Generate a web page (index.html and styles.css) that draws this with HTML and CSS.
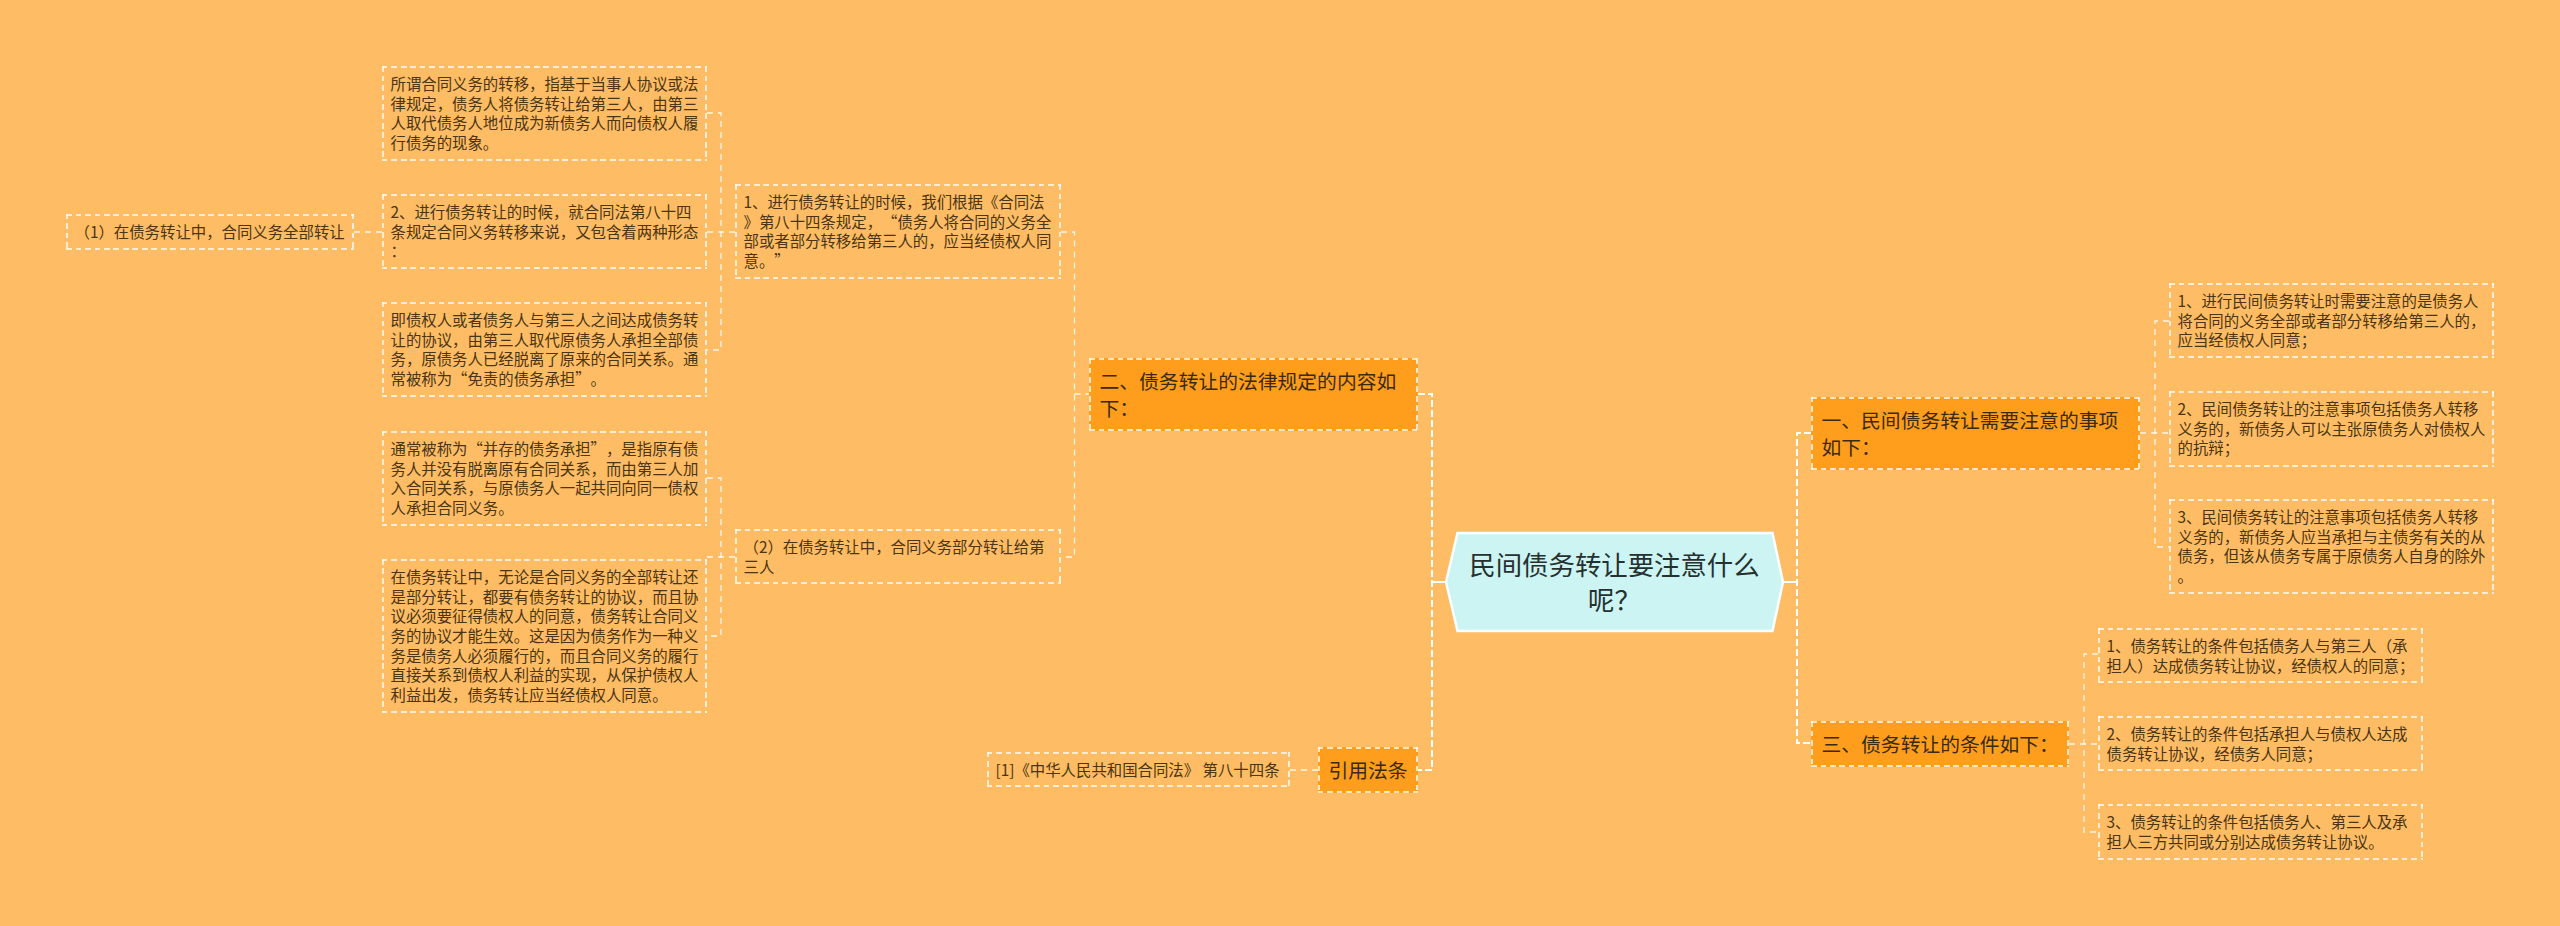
FILE: index.html
```html
<!DOCTYPE html>
<html lang="zh-CN">
<head>
<meta charset="utf-8">
<title>民间债务转让要注意什么呢？</title>
<link rel="stylesheet" href="styles.css">
</head>
<body>
<main class="map">
  <svg class="links" width="2560" height="926" viewBox="0 0 2560 926" aria-hidden="true">
    <g class="thin">
      <path d="M354 232H382"/>
      <path d="M707 113H721V350H707"/>
      <path d="M707 232H735"/>
      <path d="M707 478H721V636H707"/>
      <path d="M707 557H735"/>
      <path d="M1061 232H1074.5V557H1061"/>
      <path d="M1074.5 394H1089"/>
      <path d="M2140 433H2169"/>
      <path d="M2169 321H2155V547H2169"/>
      <path d="M2069 744H2098"/>
      <path d="M2098 654H2084V832H2098"/>
      <path d="M1290 770H1318"/>
    </g>
    <g class="thick">
      <path d="M1418 394H1432V770H1418"/>
      <path d="M1811 433H1797V743H1811"/>
    </g>
    <path class="stub" d="M1432 582H1446"/>
    <path class="stub" d="M1783 582H1797"/>
    <polygon class="root-shape" points="1446,582 1457.500,533 1772.500,533 1783,582 1772.500,631 1457.500,631"/>
  </svg>

  <div class="node root">民间债务转让要注意什么<br>呢？</div>

  <div class="node main n-left2">二、债务转让的法律规定的内容如<br>下：</div>
  <div class="node main n-cite">引用法条</div>
  <div class="node main n-right1">一、民间债务转让需要注意的事项<br>如下：</div>
  <div class="node main n-right3">三、债务转让的条件如下：</div>

  <div class="node leaf b1">1、进行债务转让的时候，我们根据《合同法<br>》第八十四条规定，“债务人将合同的义务全<br>部或者部分转移给第三人的，应当经债权人同<br>意。”</div>
  <div class="node leaf b2">（2）在债务转让中，合同义务部分转让给第<br>三人</div>
  <div class="node leaf l1">（1）在债务转让中，合同义务全部转让</div>
  <div class="node leaf a1">所谓合同义务的转移，指基于当事人协议或法<br>律规定，债务人将债务转让给第三人，由第三<br>人取代债务人地位成为新债务人而向债权人履<br>行债务的现象。</div>
  <div class="node leaf a2">2、进行债务转让的时候，就合同法第八十四<br>条规定合同义务转移来说，又包含着两种形态<br>：</div>
  <div class="node leaf a3">即债权人或者债务人与第三人之间达成债务转<br>让的协议，由第三人取代原债务人承担全部债<br>务，原债务人已经脱离了原来的合同关系。通<br>常被称为“免责的债务承担”。</div>
  <div class="node leaf a4">通常被称为“并存的债务承担”，是指原有债<br>务人并没有脱离原有合同关系，而由第三人加<br>入合同关系，与原债务人一起共同向同一债权<br>人承担合同义务。</div>
  <div class="node leaf a5">在债务转让中，无论是合同义务的全部转让还<br>是部分转让，都要有债务转让的协议，而且协<br>议必须要征得债权人的同意，债务转让合同义<br>务的协议才能生效。这是因为债务作为一种义<br>务是债务人必须履行的，而且合同义务的履行<br>直接关系到债权人利益的实现，从保护债权人<br>利益出发，债务转让应当经债权人同意。</div>
  <div class="node leaf c1">[1]《中华人民共和国合同法》 第八十四条</div>

  <div class="node leaf r1">1、进行民间债务转让时需要注意的是债务人<br>将合同的义务全部或者部分转移给第三人的，<br>应当经债权人同意；</div>
  <div class="node leaf r2">2、民间债务转让的注意事项包括债务人转移<br>义务的，新债务人可以主张原债务人对债权人<br>的抗辩；</div>
  <div class="node leaf r3">3、民间债务转让的注意事项包括债务人转移<br>义务的，新债务人应当承担与主债务有关的从<br>债务，但该从债务专属于原债务人自身的除外<br>。</div>
  <div class="node leaf s1">1、债务转让的条件包括债务人与第三人（承<br>担人）达成债务转让协议，经债权人的同意；</div>
  <div class="node leaf s2">2、债务转让的条件包括承担人与债权人达成<br>债务转让协议，经债务人同意；</div>
  <div class="node leaf s3">3、债务转让的条件包括债务人、第三人及承<br>担人三方共同或分别达成债务转让协议。</div>
</main>
</body>
</html>
```

FILE: styles.css
```css
html, body {
  margin: 0;
  padding: 0;
  background: #febc64;
}

.map {
  position: relative;
  width: 2560px;
  height: 926px;
  overflow: hidden;
  background: #febc64;
  font-family: "Noto Sans CJK SC", "Noto Sans", sans-serif;
  text-spacing-trim: space-all;
}

.links {
  position: absolute;
  left: 0;
  top: 0;
}

.links path {
  fill: none;
  stroke: #fff;
}

.thin path {
  stroke-width: 1.3;
  stroke-opacity: 0.85;
  stroke-dasharray: 6 5;
}

.thick path {
  stroke-width: 2;
  stroke-dasharray: 7 3;
}

.links .stub {
  stroke-width: 2;
}

.root-shape {
  fill: #ccf4f2;
  stroke: #fff;
  stroke-width: 2.5;
}

.node {
  position: absolute;
  box-sizing: border-box;
  white-space: nowrap;
}

.leaf,
.main {
  --dash-h: repeating-linear-gradient(90deg, rgba(255, 255, 255, 0.72) 0 5.500px, transparent 5.500px 9.500px);
  --dash-v: repeating-linear-gradient(180deg, rgba(255, 255, 255, 0.72) 0 5.500px, transparent 5.500px 9.500px);
  background-image: var(--dash-h), var(--dash-h), var(--dash-v), var(--dash-v);
  background-position: left top, left bottom, left top, right top;
  background-size: 100% 2px, 100% 2px, 2px 100%, 2px 100%;
  background-repeat: no-repeat;
}

.leaf {
  padding: 8px 8px 0 8.500px;
  font-size: 15.400px;
  line-height: 19.670px;
  color: #4a3514;
}

.main {
  padding: 9px 10px 0 10.500px;
  font-size: 19.800px;
  line-height: 27px;
  color: #3a2a10;
  background-color: #fe9e1c;
}

.root {
  left: 1446px;
  top: 533px;
  width: 337px;
  height: 98px;
  padding-top: 13px;
  text-align: center;
  font-size: 26.400px;
  line-height: 35px;
  color: #26302f;
}

/* Diagram nodes: the place on the canvas is the content */
.n-left2  { left: 1089px; top: 358px; width: 329px; height: 73px; }
.n-cite   { left: 1318px; top: 747px; width: 100px; height: 46px; }
.n-right1 { left: 1811px; top: 397px; width: 329px; height: 73px; }
.n-right3 { left: 1811px; top: 721px; width: 258px; height: 46px; }

.b1 { left: 735px; top: 184px; width: 326px; height: 95px; }
.b2 { left: 735px; top: 529px; width: 326px; height: 55px; }
.l1 { left: 66px;  top: 214px; width: 288px; height: 36px; }
.a1 { left: 382px; top: 66px;  width: 325px; height: 95px; }
.a2 { left: 382px; top: 194px; width: 325px; height: 75px; }
.a3 { left: 382px; top: 302px; width: 325px; height: 95px; }
.a4 { left: 382px; top: 431px; width: 325px; height: 95px; }
.a5 { left: 382px; top: 559px; width: 325px; height: 154px; }
.c1 { left: 987px; top: 752px; width: 303px; height: 35px; }

.r1 { left: 2169px; top: 283px; width: 325px; height: 75px; }
.r2 { left: 2169px; top: 391px; width: 325px; height: 76px; }
.r3 { left: 2169px; top: 499px; width: 325px; height: 95px; }
.s1 { left: 2098px; top: 628px; width: 325px; height: 55px; }
.s2 { left: 2098px; top: 716px; width: 325px; height: 55px; }
.s3 { left: 2098px; top: 804px; width: 325px; height: 56px; }
```
